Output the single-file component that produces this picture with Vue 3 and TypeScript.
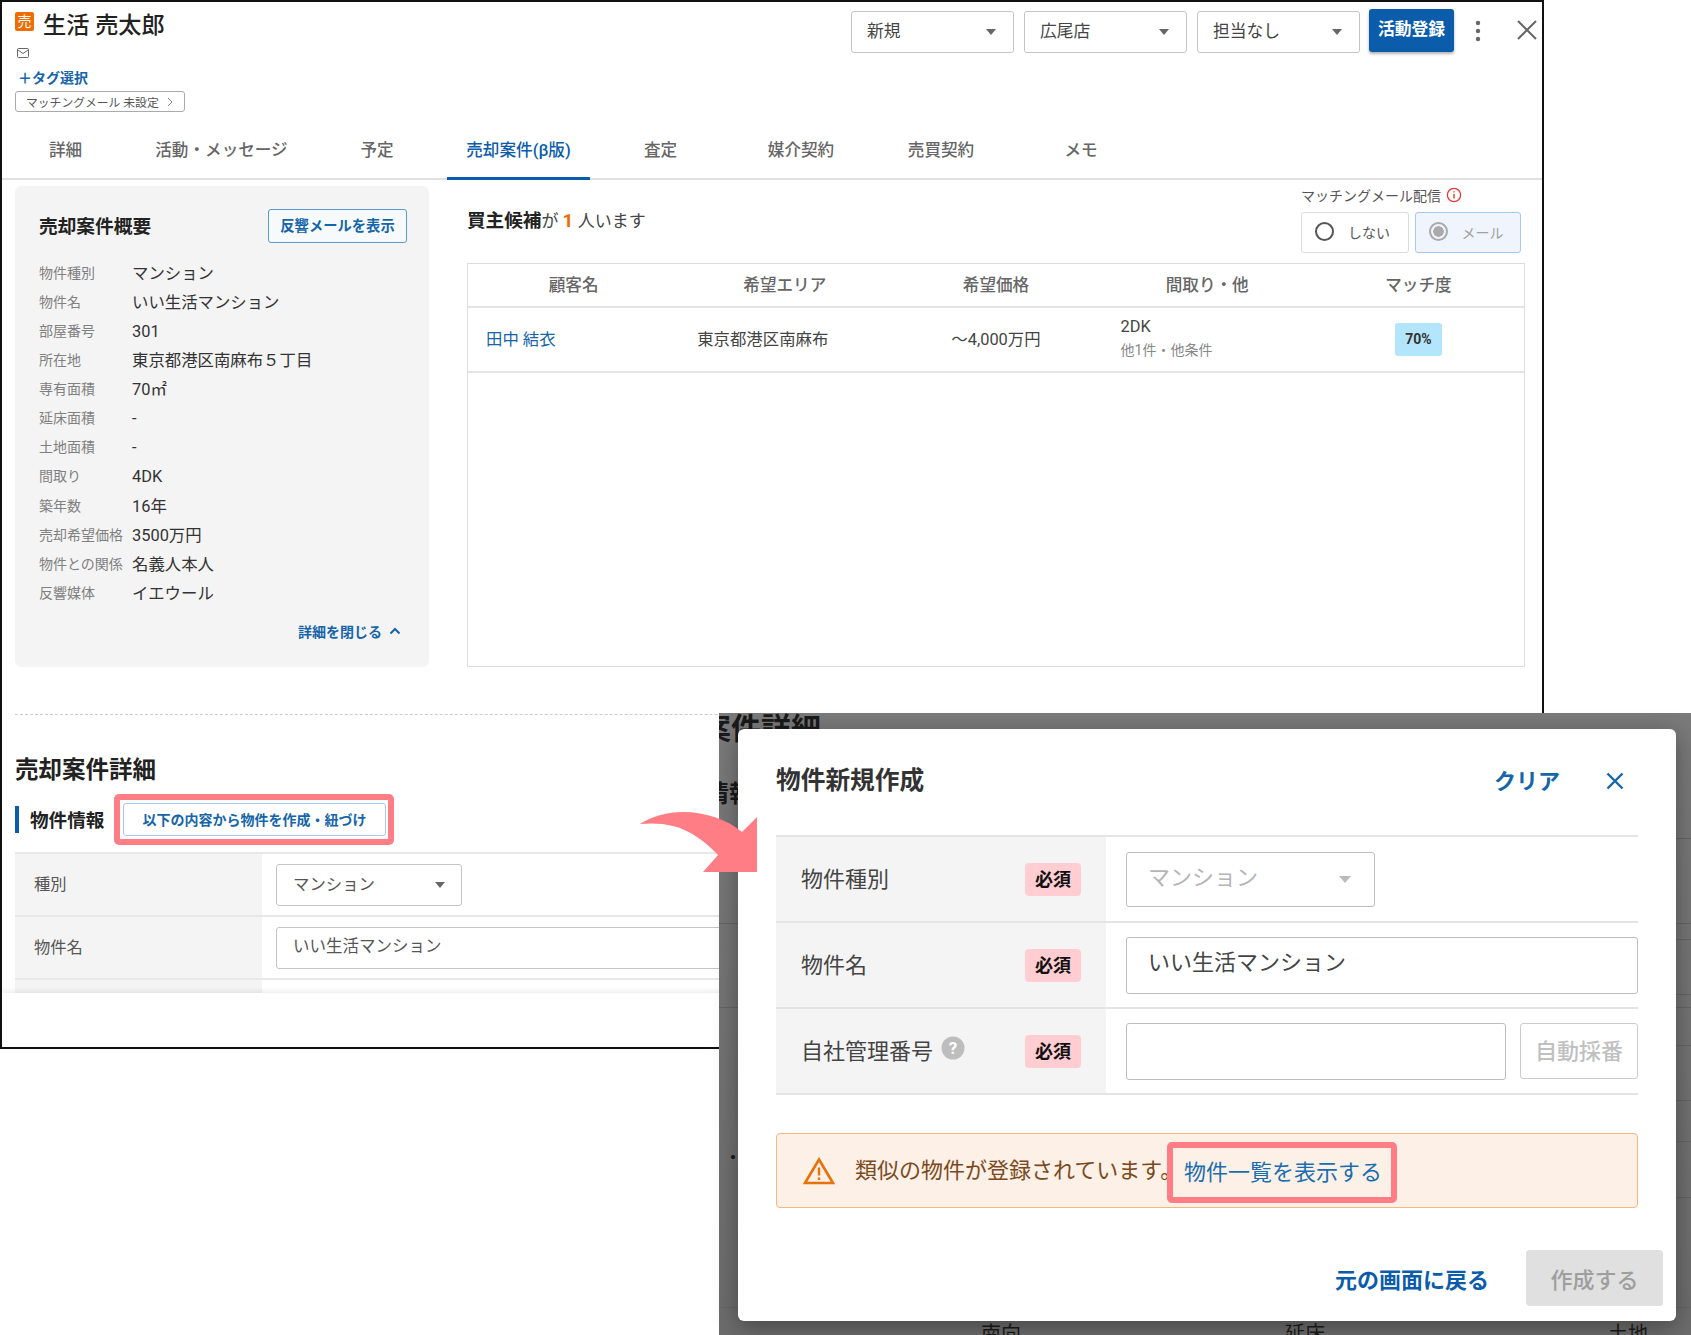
<script setup lang="ts">
const tabs = ['詳細', '活動・メッセージ', '予定', '売却案件(β版)', '査定', '媒介契約', '売買契約', 'メモ']
const selects = ['新規', '広尾店', '担当なし']
const summary: [string, string][] = [
  ['物件種別', 'マンション'],
  ['物件名', 'いい生活マンション'],
  ['部屋番号', '301'],
  ['所在地', '東京都港区南麻布５丁目'],
  ['専有面積', '70㎡'],
  ['延床面積', '-'],
  ['土地面積', '-'],
  ['間取り', '4DK'],
  ['築年数', '16年'],
  ['売却希望価格', '3500万円'],
  ['物件との関係', '名義人本人'],
  ['反響媒体', 'イエウール'],
]
const columns = ['顧客名', '希望エリア', '希望価格', '間取り・他', 'マッチ度']
// rules of the page behind the dialog, measured from the top of the backdrop
const ghostLines = [210, 294, 594]
const ghostLinesRight = [125, 226, 281, 332, 387, 428, 484]
</script>

<template>
  <div class="canvas">
    <!-- Customer window -->
    <section class="window">
      <header class="head">
        <div class="who">
          <div class="name-row">
            <span class="sell-badge">売</span>
            <h1 class="name">生活 売太郎</h1>
          </div>
          <svg class="mail" viewBox="0 0 12 10" width="12" height="10">
            <rect x="0.5" y="0.5" width="11" height="9" rx="1" fill="none" stroke="#666" />
            <path d="M1 2l5 3.5L11 2" fill="none" stroke="#666" />
          </svg>
          <a class="tag-link">＋タグ選択</a>
          <button class="match-chip">
            マッチングメール 未設定
            <svg viewBox="0 0 6 10" width="6" height="10"><path d="M1 1l4 4-4 4" fill="none" stroke="#888" /></svg>
          </button>
        </div>
        <div class="actions">
          <div v-for="s in selects" :key="s" class="select top-select">
            <span>{{ s }}</span><i class="caret"></i>
          </div>
          <button class="primary">活動登録</button>
          <svg class="kebab" viewBox="0 0 6 22" width="6" height="22">
            <circle cx="3" cy="3" r="2.2" fill="#666" />
            <circle cx="3" cy="11" r="2.2" fill="#666" />
            <circle cx="3" cy="19" r="2.2" fill="#666" />
          </svg>
          <svg class="close" viewBox="0 0 20 20" width="20" height="20">
            <path d="M1 1l18 18M19 1L1 19" stroke="#666" stroke-width="2" fill="none" />
          </svg>
        </div>
      </header>

      <nav class="tabs">
        <a v-for="(t, i) in tabs" :key="t" class="tab" :class="{ active: i === 3 }">{{ t }}</a>
      </nav>

      <div class="body">
        <aside class="summary">
          <div class="summary-head">
            <h2>売却案件概要</h2>
            <button class="outline">反響メールを表示</button>
          </div>
          <dl class="facts">
            <template v-for="row in summary" :key="row[0]">
              <dt>{{ row[0] }}</dt>
              <dd>{{ row[1] }}</dd>
            </template>
          </dl>
          <a class="collapse">
            詳細を閉じる
            <svg viewBox="0 0 12 8" width="12" height="8"><path d="M1.5 6.5L6 2l4.5 4.5" fill="none" stroke="#1565a8" stroke-width="2" /></svg>
          </a>
        </aside>

        <div class="buyers">
          <div class="buyers-top">
            <p class="count"><b>買主候補</b>が <em>1</em> 人います</p>
            <div class="delivery">
              <div class="delivery-label">
                マッチングメール配信
                <svg viewBox="0 0 16 16" width="16" height="16">
                  <circle cx="8" cy="8" r="6.6" fill="none" stroke="#e53935" stroke-width="1.3" />
                  <path d="M8 7v4.5M8 4.2v1.4" stroke="#e53935" stroke-width="1.4" />
                </svg>
              </div>
              <div class="radios">
                <label class="radio"><i class="dot"></i>しない</label>
                <label class="radio on"><i class="dot"></i>メール</label>
              </div>
            </div>
          </div>

          <div class="result">
            <div class="result-row result-head">
              <span v-for="c in columns" :key="c">{{ c }}</span>
            </div>
            <div class="result-row result-item">
              <a class="cell-left buyer">田中 結衣</a>
              <span class="cell-left">東京都港区南麻布</span>
              <span>～4,000万円</span>
              <span class="cell-left plan">2DK<small>他1件・他条件</small></span>
              <span><b class="rate">70%</b></span>
            </div>
          </div>
        </div>
      </div>

      <div class="detail">
        <h2 class="detail-title">売却案件詳細</h2>
        <div class="detail-sub">
          <h3>物件情報</h3>
          <div class="mark">
            <button class="link-btn">以下の内容から物件を作成・紐づけ</button>
          </div>
        </div>
        <div class="form-row">
          <div class="form-label">種別</div>
          <div class="form-value">
            <div class="select detail-select"><span>マンション</span><i class="caret"></i></div>
          </div>
        </div>
        <div class="form-row">
          <div class="form-label">物件名</div>
          <div class="form-value"><div class="field">いい生活マンション</div></div>
        </div>
        <div class="form-row">
          <div class="form-label"></div>
          <div class="form-value"></div>
        </div>
      </div>
      <div class="window-foot"></div>
    </section>

    <!-- Dimmed page behind the dialog -->
    <div class="dim">
      <i v-for="y in ghostLines" :key="y" class="ghost-line" :style="{ top: y + 'px' }"></i>
      <i v-for="y in ghostLinesRight" :key="y" class="ghost-line right" :style="{ top: y + 'px' }"></i>
      <span class="ghost ghost-title">案件詳細</span>
      <span class="ghost ghost-sub">情報</span>
      <span class="ghost ghost-dot">・</span>
      <span class="ghost ghost-a">南向</span>
      <span class="ghost ghost-b">延床</span>
      <span class="ghost ghost-c">土地</span>
    </div>

    <!-- Create dialog -->
    <section class="dialog">
      <div class="dialog-head">
        <h2>物件新規作成</h2>
        <a class="clear">クリア</a>
        <svg viewBox="0 0 18 18" width="18" height="18">
          <path d="M1.5 1.5l15 15M16.5 1.5l-15 15" stroke="#1565a8" stroke-width="2.4" fill="none" />
        </svg>
      </div>
      <div class="dialog-form">
        <div class="d-row">
          <div class="d-label"><span>物件種別</span><b class="req">必須</b></div>
          <div class="d-value">
            <div class="select d-select"><span>マンション</span><i class="caret"></i></div>
          </div>
        </div>
        <div class="d-row">
          <div class="d-label"><span>物件名</span><b class="req">必須</b></div>
          <div class="d-value"><div class="d-field">いい生活マンション</div></div>
        </div>
        <div class="d-row">
          <div class="d-label">
            <span>自社管理番号</span>
            <svg class="help" viewBox="0 0 24 24" width="24" height="24">
              <circle cx="12" cy="12" r="11.5" fill="#bdbdbd" />
              <text x="12" y="18" text-anchor="middle" fill="#fff" font-size="17" font-weight="700" font-family="Roboto, sans-serif">?</text>
            </svg>
            <b class="req">必須</b>
          </div>
          <div class="d-value">
            <div class="d-field grow"></div>
            <button class="auto">自動採番</button>
          </div>
        </div>
      </div>

      <div class="notice">
        <svg viewBox="0 0 32 28" width="32" height="28">
          <path d="M16 2.5L30 26H2z" fill="none" stroke="#e8710a" stroke-width="2.6" stroke-linejoin="miter" />
          <path d="M16 10.5v8M16 20.5v2.5" stroke="#e8710a" stroke-width="2.4" />
        </svg>
        <span class="notice-text">類似の物件が登録されています。</span>
        <a class="notice-link">物件一覧を表示する</a>
      </div>

      <div class="dialog-foot">
        <a class="back">元の画面に戻る</a>
        <button class="create" disabled>作成する</button>
      </div>
    </section>

    <svg class="arrow" viewBox="0 0 120 60" width="120" height="60">
      <path d="M2 12C14 4 30 0 45 0 68 0 90 8 104 20L119 5V60H65L80 43C68 30 52 18 35 14 24 11 12 11 2 12Z" fill="#ff7d84" />
    </svg>
  </div>
</template>

<style>
html,
body {
  margin: 0;
  background: #fff;
}
</style>

<style scoped>
.canvas {
  position: relative;
  width: 1691px;
  height: 1335px;
  overflow: hidden;
  font-family: Roboto, "Noto Sans CJK JP", sans-serif;
  color: #333;
}

h1, h2, h3, p, dl, dd {
  margin: 0;
}

button {
  font-family: inherit;
}

/* Customer window */
.window {
  position: absolute;
  left: 0;
  top: 0;
  width: 1544px;
  height: 1049px;
  box-sizing: border-box;
  border: 2px solid #111;
  background: #fff;
  overflow: hidden;
}

.head {
  display: flex;
  justify-content: space-between;
  height: 132px;
}

.who {
  display: flex;
  flex-direction: column;
  align-items: flex-start;
  padding: 10px 0 0 13px;
}

.name-row {
  display: flex;
  align-items: flex-start;
  gap: 9px;
  height: 30px;
}

.sell-badge {
  width: 19px;
  height: 19px;
  border-radius: 2px;
  background: #ef6c00;
  color: #fff;
  font-size: 14px;
  line-height: 19px;
  text-align: center;
}

.name {
  margin-top: -1px;
  font-size: 23.2px;
  line-height: 28px;
  font-weight: 500;
  color: #222;
}

.mail {
  margin: 6px 0 0 2px;
}

.tag-link {
  margin: 11px 0 0 3px;
  font-size: 14px;
  line-height: 18px;
  font-weight: 700;
  color: #1565a8;
}

.match-chip {
  display: flex;
  align-items: center;
  gap: 8px;
  margin-top: 4px;
  width: 170px;
  height: 21px;
  padding: 0 0 0 10px;
  box-sizing: border-box;
  border: 1px solid #aaa;
  border-radius: 3px;
  background: #fff;
  font-size: 11.8px;
  white-space: nowrap;
  color: #555;
}

.actions {
  display: flex;
  align-items: flex-start;
  padding: 7px 5px 0 0;
}

.select {
  display: flex;
  align-items: center;
  justify-content: space-between;
  box-sizing: border-box;
  border: 1px solid #c4c4c4;
  border-radius: 3px;
  background: #fff;
}

.caret {
  width: 0;
  height: 0;
  border-left: 5.5px solid transparent;
  border-right: 5.5px solid transparent;
  border-top: 6px solid #666;
}

.top-select {
  width: 163px;
  height: 42px;
  margin: 2px 10px 0 0;
  padding: 0 17px 0 15px;
  font-size: 16.8px;
  color: #444;
}

.top-select span {
  margin-bottom: 4px;
}

.primary {
  width: 85px;
  height: 43px;
  margin-left: -1px;
  padding: 0 0 5px;
  border: 0;
  border-radius: 3px;
  background: #0b5cab;
  box-shadow: 0 2px 3px rgba(0, 0, 0, 0.3);
  color: #fff;
  font-size: 16.8px;
  font-weight: 700;
  white-space: nowrap;
}

.kebab {
  margin: 11px 0 0 21px;
}

.close {
  margin: 11px 0 0 36px;
}

.tabs {
  display: grid;
  grid-template-columns: 127px 185px 133px 143px 141px 140px 140px 140px;
  height: 46px;
  border-bottom: 2px solid #e0e0e0;
  box-sizing: border-box;
}

.tab {
  text-align: center;
  font-size: 16.6px;
  font-weight: 500;
  line-height: 34px;
  color: #666;
  white-space: nowrap;
}

.tab:nth-child(3) {
  padding-right: 7px;
}

.tab.active {
  height: 46px;
  box-sizing: border-box;
  border-bottom: 3px solid #0b5cab;
  color: #0b5cab;
}

.body {
  display: flex;
  gap: 38px;
  height: 534px;
  padding: 6px 0 0 13px;
  box-sizing: border-box;
}

.summary {
  width: 414px;
  height: 481px;
  box-sizing: border-box;
  padding: 22px 22px 0 24px;
  border-radius: 6px;
  background: #f4f4f4;
}

.summary-head {
  display: flex;
  align-items: center;
  justify-content: space-between;
  height: 36px;
}

.summary-head h2 {
  margin-top: -4px;
  font-size: 18.7px;
  font-weight: 700;
  color: #222;
}

.outline {
  width: 139px;
  height: 34px;
  padding: 0 0 3px;
  border: 1px solid #5b9bd1;
  border-radius: 3px;
  background: #f7fafd;
  color: #1565a8;
  font-size: 14.3px;
  font-weight: 700;
  white-space: nowrap;
}

.facts {
  display: grid;
  grid-template-columns: 93px 1fr;
  grid-auto-rows: 29.14px;
  align-items: center;
  margin-top: 13px;
}

.facts dt {
  font-size: 14px;
  color: #808080;
  white-space: nowrap;
}

.facts dd {
  padding-top: 4px;
  font-size: 16.4px;
  line-height: 20px;
  color: #333;
}

.collapse {
  display: flex;
  align-items: center;
  justify-content: flex-end;
  gap: 7px;
  margin: 14px 6px 0 0;
  font-size: 14px;
  font-weight: 700;
  color: #1565a8;
}

.buyers {
  width: 1058px;
}

.buyers-top {
  display: flex;
  justify-content: space-between;
  height: 77px;
  padding-right: 4px;
  box-sizing: border-box;
}

.count {
  padding-top: 19px;
  font-size: 17px;
  color: #444;
}

.count b {
  font-size: 18.6px;
  color: #222;
}

.count em {
  font-style: normal;
  font-weight: 700;
  font-size: 19px;
  color: #ef6c00;
}

.delivery {
  width: 220px;
  margin-top: -2px;
}

.delivery-label {
  display: flex;
  align-items: center;
  gap: 5px;
  height: 22px;
  font-size: 14px;
  color: #555;
}

.radios {
  display: flex;
  gap: 6px;
  margin-top: 6px;
}

.radio {
  display: flex;
  align-items: center;
  gap: 14px;
  width: 108px;
  height: 41px;
  padding: 0 0 2px 13px;
  box-sizing: border-box;
  border: 1px solid #ddd;
  border-radius: 3px;
  font-size: 14px;
  color: #555;
}

.radio .dot {
  width: 19px;
  height: 19px;
  box-sizing: border-box;
  border: 2px solid #555;
  border-radius: 50%;
}

.radio.on {
  width: 107px;
  border-color: #a9c8ee;
  background: #f0f5fd;
  color: #a0a0a0;
}

.radio.on .dot {
  border-color: #aaa;
  background: radial-gradient(circle, #aaa 0 5px, transparent 5.5px);
}

.result {
  height: 404px;
  box-sizing: border-box;
  border: 1px solid #ddd;
}

.result-row {
  display: grid;
  grid-template-columns: repeat(5, 1fr);
  align-items: center;
  box-sizing: border-box;
  border-bottom: 2px solid #e4e4e4;
  text-align: center;
}

.result-head {
  height: 44px;
  padding-bottom: 2px;
  font-size: 16.6px;
  font-weight: 500;
  color: #666;
}

.result-item {
  height: 65px;
  padding-bottom: 3px;
  font-size: 16.4px;
  color: #444;
}

.cell-left {
  padding-left: 18px;
  text-align: left;
}

.buyer {
  color: #1565a8;
}

.plan {
  display: flex;
  flex-direction: column;
  padding-left: 19px;
}

.plan small {
  margin-top: 3px;
  font-size: 14px;
  color: #888;
}

.rate {
  display: inline-block;
  width: 47px;
  height: 33px;
  margin-top: 2px;
  border-radius: 3px;
  background: #b3e5fc;
  font-size: 14px;
  line-height: 33px;
  color: #333;
}

.detail {
  height: 279px;
  margin-left: 13px;
  border-top: 1px dashed #ccc;
  box-sizing: border-box;
  overflow: hidden;
}

.detail-title {
  margin-top: 39px;
  font-size: 23.5px;
  line-height: 32px;
  font-weight: 700;
  color: #222;
}

.detail-sub {
  display: flex;
  align-items: center;
  height: 51px;
  margin-top: 8px;
}

.detail-sub h3 {
  width: 84px;
  height: 27px;
  padding-left: 11px;
  border-left: 4px solid #0b5cab;
  font-size: 18.6px;
  line-height: 30px;
  font-weight: 700;
  color: #222;
  white-space: nowrap;
}

.mark {
  box-sizing: border-box;
  width: 280px;
  height: 51px;
  padding: 3px;
  border: 6px solid #ff7d84;
  border-radius: 5px;
}

.link-btn {
  display: block;
  width: 263px;
  height: 33px;
  padding: 0 0 2px;
  border: 1px solid #a9c8ee;
  border-radius: 3px;
  background: #fff;
  color: #1565a8;
  font-size: 14px;
  font-weight: 700;
  white-space: nowrap;
}

.form-row {
  display: flex;
  height: 63px;
  border-top: 2px solid #e8e8e8;
  box-sizing: border-box;
}

.detail-sub + .form-row {
  margin-top: 7px;
}

.form-label {
  width: 247px;
  padding-left: 19px;
  box-sizing: border-box;
  background: #f4f4f4;
  font-size: 16.3px;
  line-height: 62px;
  color: #555;
}

.form-value {
  flex: 1;
  padding: 9px 0 0 14px;
}

.detail-select {
  width: 186px;
  height: 42px;
  margin-top: 1px;
  padding: 0 16px 0 16px;
  font-size: 16.4px;
  color: #555;
}

.detail-select span {
  margin-bottom: 4px;
}

.field {
  height: 42px;
  margin-top: 1px;
  padding-left: 16px;
  box-sizing: border-box;
  border: 1px solid #c4c4c4;
  border-radius: 3px;
  font-size: 16.5px;
  line-height: 38px;
  color: #555;
}

.window-foot {
  height: 60px;
  background: #fff;
  box-shadow: 0 -2px 5px rgba(0, 0, 0, 0.08);
  position: relative;
}

/* Dimmed backdrop */
.dim {
  position: absolute;
  left: 719px;
  top: 713px;
  right: 0;
  bottom: 0;
  overflow: hidden;
  background: linear-gradient(#7a7a7a, #6c6c6c);
}

.ghost-line {
  position: absolute;
  left: 0;
  right: 0;
  height: 1px;
  background: #646464;
}

.ghost-line.right {
  left: 940px;
}

.ghost {
  position: absolute;
  color: #1a1a1a;
  font-weight: 700;
  white-space: nowrap;
}

.ghost-title {
  left: -18px;
  top: -4px;
  font-size: 30px;
  line-height: 40px;
}

.ghost-sub {
  left: -14px;
  top: 66px;
  font-size: 24px;
  line-height: 30px;
}

.ghost-dot {
  left: 6px;
  top: 435px;
  font-size: 16px;
  line-height: 20px;
}

.ghost-a,
.ghost-b,
.ghost-c {
  top: 608px;
  font-size: 20px;
  font-weight: 400;
  line-height: 26px;
}

.ghost-a { left: 262px; }
.ghost-b { left: 566px; }
.ghost-c { left: 889px; }

/* Create dialog */
.dialog {
  position: absolute;
  left: 738px;
  top: 729px;
  width: 938px;
  height: 592px;
  padding: 0 38px;
  box-sizing: border-box;
  border-radius: 6px;
  background: #fff;
  box-shadow: 0 6px 24px rgba(0, 0, 0, 0.35);
}

.dialog-head {
  display: flex;
  align-items: center;
  height: 106px;
  padding: 0 14px 2px 0;
  box-sizing: border-box;
}

.dialog-head h2 {
  flex: 1;
  margin-bottom: 6px;
  font-size: 24.7px;
  font-weight: 700;
  color: #333;
}

.clear {
  margin: 0 46px 4px 0;
  font-size: 22px;
  font-weight: 700;
  color: #1565a8;
}

.dialog-form {
  border-top: 2px solid #e4e4e4;
}

.d-row {
  display: flex;
  height: 86px;
  border-bottom: 2px solid #e4e4e4;
  box-sizing: border-box;
}

.d-label {
  display: flex;
  align-items: center;
  width: 330px;
  padding: 0 25px;
  box-sizing: border-box;
  background: #f4f4f4;
  font-size: 22px;
  color: #444;
}

.d-label span {
  margin-bottom: 5px;
}

.help {
  margin: -6px 0 0 8px;
}

.req {
  margin-left: auto;
  width: 56px;
  height: 33px;
  border-radius: 4px;
  background: #ffcdd2;
  color: #111;
  font-size: 18px;
  line-height: 33px;
  text-align: center;
}

.d-value {
  display: flex;
  flex: 1;
  align-items: center;
  gap: 14px;
  padding-left: 20px;
}

.d-select {
  width: 249px;
  height: 55px;
  padding: 0 23px 0 21px;
  border-color: #bdbdbd;
  font-size: 22px;
  color: #b5b5b5;
}

.d-select span {
  margin-bottom: 9px;
}

.d-select .caret {
  border-left-width: 6.5px;
  border-right-width: 6.5px;
  border-top: 7px solid #bbb;
}

.d-field {
  flex: 1;
  height: 57px;
  padding-left: 21px;
  box-sizing: border-box;
  border: 1px solid #bdbdbd;
  border-radius: 3px;
  font-size: 22px;
  line-height: 50px;
  color: #444;
}

.auto {
  width: 118px;
  height: 56px;
  padding: 0 0 4px;
  border: 1px solid #ccc;
  border-radius: 3px;
  background: #fff;
  color: #c0c0c0;
  font-size: 22px;
  font-weight: 500;
  white-space: nowrap;
}

.notice {
  position: relative;
  display: flex;
  align-items: center;
  height: 75px;
  margin-top: 38px;
  padding: 0 0 0 26px;
  box-sizing: border-box;
  border: 1px solid #f5b880;
  border-radius: 4px;
  background: #fdf0e6;
  font-size: 22px;
  color: #7a4a1e;
}

.notice-text {
  margin: 0 0 5px 20px;
  white-space: nowrap;
}

.notice-link {
  position: absolute;
  left: 390px;
  top: 8px;
  width: 230px;
  height: 61px;
  box-sizing: border-box;
  padding-left: 11px;
  border: 6px solid #ff7d84;
  border-radius: 5px;
  line-height: 50px;
  color: #1a6db0;
  white-space: nowrap;
}

.dialog-foot {
  display: flex;
  align-items: center;
  justify-content: flex-end;
  gap: 37px;
  margin: 42px -25px 0 0;
}

.back {
  font-size: 22px;
  font-weight: 700;
  color: #0b5cab;
}

.create {
  width: 137px;
  height: 56px;
  padding: 0;
  border: 0;
  border-radius: 4px;
  background: #e0e0e0;
  color: #9e9e9e;
  font-size: 22px;
  font-weight: 500;
}

.arrow {
  position: absolute;
  left: 638px;
  top: 812px;
}
</style>
